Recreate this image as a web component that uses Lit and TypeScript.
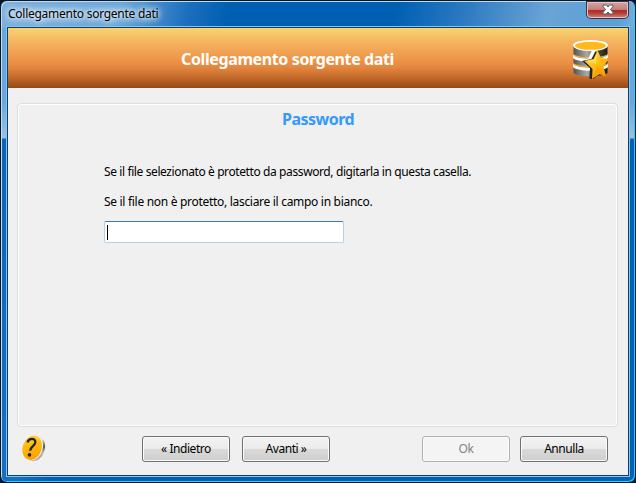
import { LitElement, html, css, svg } from "lit";
import { customElement, property } from "lit/decorators.js";

@customElement("dialog-button")
class DialogButton extends LitElement {
  @property() label = "";
  @property({ type: Boolean }) disabled = false;
  static styles = css`
    :host { display: block; width: 88px; height: 26px; }
    button {
      display: flex; align-items: center; justify-content: center;
      box-sizing: border-box; width: 100%; height: 100%; padding: 0 0 1px;
      border: 1px solid #707070; border-radius: 3px;
      background: linear-gradient(#f3f3f3 0, #ebebeb 48%, #dadada 52%, #cdcdcd 100%);
      box-shadow: inset 0 0 0 1px #fafafa;
      color: #000; font: 12px/16px "Noto Sans", "Open Sans", sans-serif;
      letter-spacing: -0.45px; white-space: pre;
    }
    button:disabled { border-color: #adb2b5; background: #f4f4f4; color: #838383; }
  `;
  render() {
    return html`<button ?disabled=${this.disabled}>${this.label}</button>`;
  }
}

const databaseIcon = svg`
  <defs>
    <linearGradient id="steel"><stop offset="0" stop-color="#555"/><stop offset=".4" stop-color="#aaa"/><stop offset=".65" stop-color="#555"/><stop offset="1" stop-color="#1c1c1c"/></linearGradient>
    <linearGradient id="gold" x2=".7" y2="1"><stop offset="0" stop-color="#ffe04a"/><stop offset=".5" stop-color="#ffc11c"/><stop offset="1" stop-color="#f79a00"/></linearGradient>
  </defs>
  <path d="M1.500 29v7c5 4.500 29 4.500 34 0v-7z" fill="url(#steel)"/>
  <path d="M1 27c5 5 30 5 35 0v3c-5 5-30 5-35 0z" fill="#fff"/>
  <path d="M3 25.500c5 4 26 4 31 0v2c-5 4-26 4-31 0z" fill="#ffb80d"/>
  <path d="M1.500 20v6c5 4.500 29 4.500 34 0v-6z" fill="url(#steel)"/>
  <path d="M1 18c5 5 30 5 35 0v3c-5 5-30 5-35 0z" fill="#fff"/>
  <path d="M3 16.500c5 4 26 4 31 0v2c-5 4-26 4-31 0z" fill="#ffb80d"/>
  <path d="M1.500 9v8c5 4.500 29 4.500 34 0V9z" fill="url(#steel)"/>
  <ellipse cx="18.500" cy="8.500" rx="17.500" ry="5.500" fill="#fff"/>
  <ellipse cx="18.500" cy="8.800" rx="15.500" ry="4" fill="#ffb91a"/>
  <path d="M20 13h5l-4 9h-5z" fill="#fff"/>
  <path d="M23.500 14l-4 8-9.500 2 8 7-.5 10.500 3 1 4-3V16z" fill="#222"/>
  <path d="M25.500 13.500l3.500 7.500 8 1-5.500 7.500 2.500 10-6.500-2.500-7.500 5 .5-10-8-8 9-2z" fill="url(#gold)"/>
  <path d="M25.500 15l-1.500 12-10-3 8-1.500z" fill="#ffe56a" opacity=".65"/>
  <path d="M25 29l8 10-6-3-6.500 5z" fill="#f99b00" opacity=".6"/>`;

const helpIcon = svg`
  <defs>
    <linearGradient id="rim" x2="1" y2="1"><stop offset="0" stop-color="#fff"/><stop offset=".4" stop-color="#ddd"/><stop offset=".62" stop-color="#555"/><stop offset=".75" stop-color="#bbb"/><stop offset="1" stop-color="#777"/></linearGradient>
    <linearGradient id="coin" x2=".5" y2="1"><stop offset="0" stop-color="#ffdf72"/><stop offset=".45" stop-color="#ffbd12"/><stop offset="1" stop-color="#ffa000"/></linearGradient>
  </defs>
  <ellipse cx="14" cy="14.500" rx="9.800" ry="12.800" transform="rotate(18 14 14.500)" fill="url(#rim)"/>
  <ellipse cx="11.500" cy="13.700" rx="10.200" ry="13" transform="rotate(18 11.500 13.700)" fill="#f8f4e8"/>
  <ellipse cx="11.100" cy="13.700" rx="9.500" ry="12.500" transform="rotate(18 11.100 13.700)" fill="url(#coin)"/>
  <path d="M6.500 8.500C7.500 4 15 3.500 14.300 8.600c-.5 3.200-5 4.200-5.200 8.200" fill="none" stroke="#252525" stroke-width="2.300"/>
  <ellipse cx="8.500" cy="20.800" rx="1.800" ry="1.900" fill="#252525"/>`;

@customElement("app-root")
class AppRoot extends LitElement {
  static styles = css`
    :host { display: block; width: 636px; height: 483px; background: #00182c; font: 12px/16px "Noto Sans", "Open Sans", sans-serif; color: #000; }
    * { box-sizing: border-box; }
    .window {
      display: flex; flex-direction: column; width: 636px; height: 483px; padding: 1px 5px 5px 5px;
      border: 1px solid #00182c; border-radius: 7px;
      box-shadow: inset 1px 1px #c2dcef, inset -1px -1px #28cfff;
      background:
        linear-gradient(90deg, transparent 15px, #005fb3 50px, #005fb3 580px, transparent 625px) 0 100% / 100% 8px no-repeat,
        linear-gradient(100deg, #7db0dd 0, #6aa7d9 120px, #1d6fbd 185px, #005fb3 225px, #005fb3 390px, #2a78c0 455px, #69a4d5 540px, #5b9fd5 610px, #76b1dd 100%) 0 0 / 100% 27px no-repeat,
        linear-gradient(90deg, transparent 50%, #0060b5 50%) 0 140px / 100% 100% no-repeat,
        linear-gradient(#6ba6d7 0, #6aa7da 100px, #98c2e2 137px, #0b65b6 138px, #1770bf 100%);
    }
    .titlebar { display: flex; flex: none; justify-content: space-between; height: 24px; padding-left: 2px; }
    .caption { padding-top: 4px; letter-spacing: -0.26px; white-space: nowrap; text-shadow: 0 0 5px #fff, 0 0 8px #fff, 0 0 10px #fff; }
    .close {
      display: flex; align-items: center; justify-content: center; width: 41px; height: 16px; margin-right: 2px; padding: 0 0 1px;
      border: 1px solid #d8c4cc; border-radius: 0 0 4px 4px;
      background: linear-gradient(#d7a09c 0, #c77b77 47%, #a72b27 50%, #b5423c 75%, #d0776c 100%);
      box-shadow: 0 0 0 1px #492d3b;
    }
    .close svg { width: 12px; height: 11px; flex: none; }
    .frame { flex: 1; min-height: 0; padding: 1px; background: #064078; border: 1px solid #8dc3e7; width: 624px; }
    .client { display: flex; flex-direction: column; height: 100%; background: #f0f0f0; }
    .banner {
      display: grid; grid-template-columns: 1fr 40px; flex: none; height: 60px; padding: 9px 16px 9px 0; align-items: center;
      background: linear-gradient(#f9d46e 0, #f4b661 22%, #ee9549 52%, #e68940 64%, #c56b2b 82%, #954918 100%);
    }
    h1, h2, p { margin: 0; }
    h1 { padding: 2px 0 0 173px; color: #fff; font-size: 16px; line-height: 22px; letter-spacing: -0.38px; white-space: nowrap; }
    .database { width: 40px; height: 42px; }
    .group { flex: none; height: 324px; margin: 15px 10px 0 9px; border: 1px solid #d5dfe5; border-radius: 4px; box-shadow: inset 0 0 0 1px #fff; padding: 4px 0 0 86px; }
    h2 { padding-left: 178px; color: #3399ff; font-size: 16px; line-height: 22px; letter-spacing: -0.5px; }
    .first { margin-top: 34px; letter-spacing: -0.395px; }
    .second { margin-top: 14px; letter-spacing: -0.3px; }
    .field {
      display: flex; align-items: center; width: 240px; height: 22px; margin-top: 11px; padding-left: 2px;
      border: 1px solid #b5cfe7; border-top-color: #3d7bad; border-radius: 2px; background: #fff;
    }
    .caret { width: 1px; height: 15px; background: #000; }
    .footer { display: flex; padding: 9px 20px 0 13px; }
    .help { width: 26px; height: 28px; margin: -2px 95px 0 0; }
    .next { margin-left: 12px; }
    .ok { margin-left: 92px; }
    .cancel { margin-left: 10px; }
  `;
  render() {
    return html`
      <div class="window">
        <div class="titlebar">
          <span class="caption">Collegamento sorgente dati</span>
          <button class="close" aria-label="Chiudi">
            <svg viewBox="0 0 12 11"><path d="M1 1h3.500L6 3l1.500-2H11v1.500L8.500 5.500 11 8.500V10H7.500L6 8l-1.500 2H1V8.500l2.500-3L1 2.500z" fill="#fff" stroke="#555a65"/></svg>
          </button>
        </div>
        <div class="frame">
          <main class="client">
            <header class="banner">
              <h1>Collegamento sorgente dati</h1>
              <svg class="database" viewBox="0 0 40 42">${databaseIcon}</svg>
            </header>
            <section class="group">
              <h2>Password</h2>
              <p class="first"><span>Se il file selezionato è protetto da password, digitarla in questa casella.</span></p>
              <p class="second"><span>Se il file non è protetto, lasciare il campo in bianco.</span></p>
              <div class="field"><span class="caret"></span></div>
            </section>
            <footer class="footer">
              <svg class="help" viewBox="0 0 26 28">${helpIcon}</svg>
              <dialog-button label="« Indietro"></dialog-button>
              <dialog-button class="next" label="Avanti »"></dialog-button>
              <dialog-button class="ok" label="Ok" disabled></dialog-button>
              <dialog-button class="cancel" label="Annulla"></dialog-button>
            </footer>
          </main>
        </div>
      </div>`;
  }
}
